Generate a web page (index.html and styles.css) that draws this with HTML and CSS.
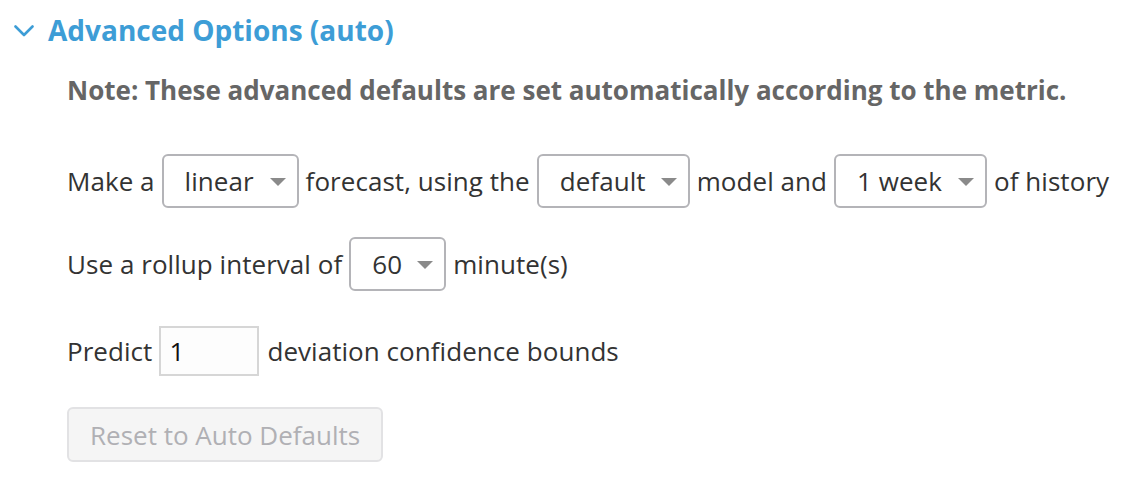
FILE: index.html
```html
<!DOCTYPE html>
<html>
<head>
<meta charset="utf-8">
<link rel="stylesheet" href="styles.css">
</head>
<body>
<div class="panel">
  <div class="header">
    <svg class="chevron" width="20" height="12" viewBox="0 0 20 12"><path d="M1.5 1.5 L10 10 L18.5 1.5" fill="none" stroke="#3d9dd6" stroke-width="2.6" stroke-linecap="round" stroke-linejoin="round"/></svg>
    <span class="title">Advanced Options (auto)</span>
  </div>
  <div class="body">
    <p class="note">Note: These advanced defaults are set automatically according to the metric.</p>
    <div class="row r1">
      <span>Make a</span>
      <div class="select w-linear"><span>linear</span><i class="caret"></i></div>
      <span>forecast, using the</span>
      <div class="select w-default"><span>default</span><i class="caret"></i></div>
      <span>model and</span>
      <div class="select w-week"><span>1 week</span><i class="caret"></i></div>
      <span>of history</span>
    </div>
    <div class="row r2">
      <span>Use a rollup interval of</span>
      <div class="select w-sixty"><span>60</span><i class="caret"></i></div>
      <span>minute(s)</span>
    </div>
    <div class="row r3">
      <span>Predict</span>
      <div class="input">1</div>
      <span>deviation confidence bounds</span>
    </div>
    <div class="row r4">
      <button class="reset" disabled>Reset to Auto Defaults</button>
    </div>
  </div>
</div>
</body>
</html>
```

FILE: styles.css
```css
html, body {
  margin: 0;
  padding: 0;
  background: #ffffff;
}
body {
  font-family: "Open Sans", "Liberation Sans", sans-serif;
  color: #333333;
}
.panel {
  padding: 10px 0 0 14px;
}
.header {
  display: flex;
  align-items: center;
  height: 40px;
}
.chevron {
  margin-right: 14px;
  margin-top: 2px;
}
.title {
  font-size: 28px;
  font-weight: 700;
  color: #3d9dd6;
}
.body {
  padding-left: 53px;
}
.note {
  margin: 20px 0 0 0;
  font-size: 26px;
  font-weight: 700;
  color: #666666;
  line-height: 40px;
}
.row {
  display: flex;
  align-items: center;
  gap: 7px;
  font-size: 26px;
  line-height: 36px;
  letter-spacing: 0.05px;
}
.r1 { margin-top: 44px; }
.r2 { margin-top: 29px; }
.r3 { margin-top: 35px; }
.r4 { margin-top: 31px; }
.select {
  box-sizing: border-box;
  height: 54px;
  border: 2px solid #b4b4b8;
  border-radius: 6px;
  display: flex;
  align-items: center;
  justify-content: space-between;
  padding: 0 11px 0 21px;
  background: #ffffff;
}
.caret {
  width: 0;
  height: 0;
  border-left: 8px solid transparent;
  border-right: 8px solid transparent;
  border-top: 8px solid #8a8a8a;
  margin-top: 2px;
}
.w-linear { width: 137px; }
.w-default { width: 153px; }
.w-week { width: 153px; }
.w-sixty { width: 97px; }
.input {
  box-sizing: border-box;
  width: 100px;
  height: 50px;
  border: 2px solid #d6d6d6;
  background: #fdfdfd;
  padding-left: 8px;
  display: flex;
  align-items: center;
  color: #111111;
  margin-right: 1px;
}
.reset {
  box-sizing: border-box;
  height: 55px;
  padding: 0 21px;
  font-family: "Open Sans", "Liberation Sans", sans-serif;
  font-size: 26px;
  color: #b0b0b4;
  background: #f5f5f5;
  border: 2px solid #e2e2e4;
  border-radius: 6px;
}
```
